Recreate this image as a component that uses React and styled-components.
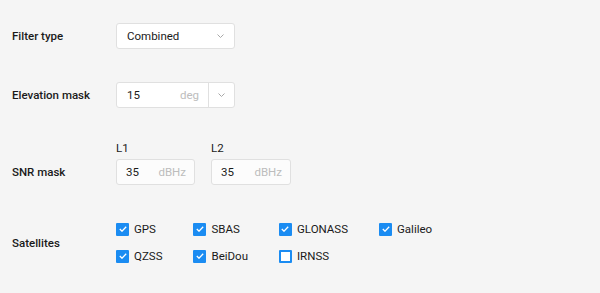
import React, { useState } from "react";
import styled, { createGlobalStyle } from 'styled-components';

const GlobalStyle = createGlobalStyle`
  html, body {
    margin: 0;
    padding: 0;
    background: #f5f5f5;
  }
  body {
    font-family: Roboto, 'Liberation Sans', sans-serif;
    font-size: 11.5px;
    color: #1c1c1c;
  }
`;

const Form = styled.div`
  display: flex;
  flex-direction: column;
  padding: 23px 12px 0 12px;
  width: 600px;
  height: 293px;
  box-sizing: border-box;
`;

const Row = styled.div`
  display: grid;
  grid-template-columns: 104px auto;
  align-items: ${p => p.$align || 'center'};
  justify-content: start;
  margin-top: ${p => p.$top || 0}px;
`;

const Label = styled.div`
  height: 26px;
  display: flex;
  align-items: center;
  font-weight: 500;
  font-size: 11.5px;
  color: #1a1a1a;
`;

const Box = styled.div`
  display: flex;
  align-items: center;
  height: 26px;
  box-sizing: border-box;
  width: ${p => p.$width}px;
  background: ${p => p.$bg || '#fff'};
  border: 1px solid #e0e0e0;
  border-radius: 3px;
`;

const Value = styled.span`
  flex: 1;
  padding-left: ${p => p.$pad || 9}px;
  font-size: 11.5px;
  color: #1a1a1a;
`;

const Unit = styled.span`
  padding-right: ${p => p.$pad || 8}px;
  color: #bdbdbd;
  font-size: 11.5px;
`;

const Caret = styled.span`
  display: flex;
  align-items: center;
  justify-content: center;
  width: ${p => p.$width || 24}px;
  height: 100%;
  border-left: ${p => p.$divided ? '1px solid #e0e0e0' : 'none'};
`;

const SnrGroup = styled.div`
  display: flex;
  gap: 16px;
`;

const SnrField = styled.div`
  display: flex;
  flex-direction: column;
  gap: 3px;
`;

const SubLabel = styled.div`
  font-size: 11.5px;
  line-height: 16px;
  color: #1a1a1a;
`;

const CheckGrid = styled.div`
  display: grid;
  grid-template-columns: repeat(4, auto);
  justify-content: start;
  column-gap: 31px;
  row-gap: 11px;
`;

const CheckItem = styled.label`
  display: flex;
  align-items: center;
  gap: 5px;
  height: 16px;
  font-size: 11.5px;
  color: #1a1a1a;
  cursor: pointer;
`;

const CheckBox = styled.span`
  display: flex;
  align-items: center;
  justify-content: center;
  width: 13px;
  height: 13px;
  box-sizing: border-box;
  border-radius: 1px;
  background: ${p => p.$on ? '#1b8cf2' : '#fff'};
  border: 2px solid #1b8cf2;
`;

const Chevron = () => (
  <svg width="7" height="4" viewBox="0 0 7 4">
    <polyline points="0.5,0.5 3.5,3.5 6.5,0.5" fill="none" stroke="#a8a8a8" strokeWidth="1" />
  </svg>
);

const Tick = () => (
  <svg width="8" height="6" viewBox="0 0 8 6">
    <polyline points="0.8,3 3,5.2 7.2,0.8" fill="none" stroke="#fff" strokeWidth="1.3" />
  </svg>
);

const satellites = [
  { name: 'GPS', on: true },
  { name: 'SBAS', on: true },
  { name: 'GLONASS', on: true },
  { name: 'Galileo', on: true },
  { name: 'QZSS', on: true },
  { name: 'BeiDou', on: true },
  { name: 'IRNSS', on: false },
];

const App = () => {
  const [sats, setSats] = useState(satellites);

  const toggle = (i) => {
    setSats(sats.map((s, idx) => idx === i ? { ...s, on: !s.on } : s));
  };

  return (
    <>
      <GlobalStyle />
      <Form>
        <Row>
          <Label>Filter type</Label>
          <Box $width={119}>
            <Value $pad={10}>Combined</Value>
            <Caret $width={28}><Chevron /></Caret>
          </Box>
        </Row>

        <Row $top={33}>
          <Label>Elevation mask</Label>
          <Box $width={119}>
            <Value $pad={10}>15</Value>
            <Unit $pad={9}>deg</Unit>
            <Caret $divided $width={25}><Chevron /></Caret>
          </Box>
        </Row>

        <Row $top={32} $align="end">
          <Label>SNR mask</Label>
          <SnrGroup>
            <SnrField>
              <SubLabel>L1</SubLabel>
              <Box $width={79} $bg="#fcfcfc">
                <Value>35</Value>
                <Unit>dBHz</Unit>
              </Box>
            </SnrField>
            <SnrField>
              <SubLabel>L2</SubLabel>
              <Box $width={80} $bg="#fcfcfc">
                <Value>35</Value>
                <Unit>dBHz</Unit>
              </Box>
            </SnrField>
          </SnrGroup>
        </Row>

        <Row $top={36}>
          <Label>Satellites</Label>
          <CheckGrid>
            {sats.map((s, i) => (
              <CheckItem key={s.name} onClick={() => toggle(i)}>
                <CheckBox $on={s.on}>{s.on && <Tick />}</CheckBox>
                {s.name}
              </CheckItem>
            ))}
          </CheckGrid>
        </Row>
      </Form>
    </>
  );
};

export default App;
